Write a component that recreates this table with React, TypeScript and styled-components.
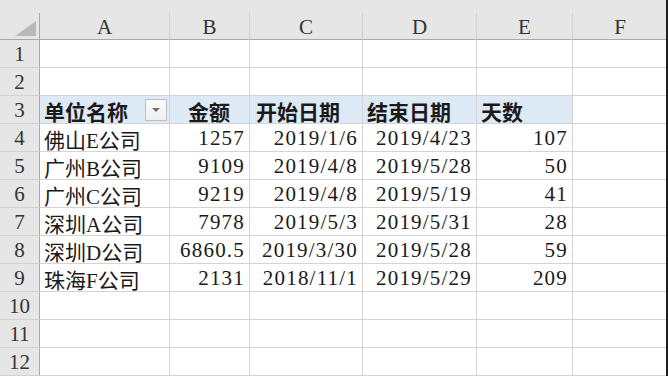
import styled, { createGlobalStyle } from "styled-components";

type Align = "left" | "right" | "center";

type Column = {
  letter: string;
  width: number;
};

const columns: Column[] = [
  { letter: "A", width: 130 },
  { letter: "B", width: 80 },
  { letter: "C", width: 113 },
  { letter: "D", width: 114 },
  { letter: "E", width: 96 },
  { letter: "F", width: 95 },
];

// 표 머리글 (3행)
const headers = [
  { text: "单位名称", pad: 4, filter: true },
  { text: "金额", pad: 18 },
  { text: "开始日期", pad: 6 },
  { text: "结束日期", pad: 4 },
  { text: "天数", pad: 4 },
];

const rows: string[][] = [
  ["佛山E公司", "1257", "2019/1/6", "2019/4/23", "107"],
  ["广州B公司", "9109", "2019/4/8", "2019/5/28", "50"],
  ["广州C公司", "9219", "2019/4/8", "2019/5/19", "41"],
  ["深圳A公司", "7978", "2019/5/3", "2019/5/31", "28"],
  ["深圳D公司", "6860.5", "2019/3/30", "2019/5/28", "59"],
  ["珠海F公司", "2131", "2018/11/1", "2019/5/29", "209"],
];

const GlobalStyle = createGlobalStyle`
  html, body {
    margin: 0;
    padding: 0;
    background: #fff;
  }
  body {
    font-family: "Liberation Serif", "Noto Sans CJK SC", serif;
    color: #222;
  }
`;

const Sheet = styled.div`
  width: 668px;
  height: 376px;
  overflow: hidden;
  display: flex;
  flex-direction: column;
  background: #fff;
  border-right: 2px solid #1e1e1e;
  box-sizing: border-box;
`;

const TopBand = styled.div`
  height: 13px;
  flex-shrink: 0;
  background: #e6e6e6;
`;

const Grid = styled.div`
  display: grid;
  grid-template-columns: 40px ${columns.map((c) => `${c.width}px`).join(" ")};
  grid-template-rows: 27px repeat(12, 28px);
`;

const Corner = styled.div`
  position: relative;
  background: #e6e6e6;
  border-right: 1px solid #a9a9a9;
  border-bottom: 1px solid #a9a9a9;
  box-sizing: border-box;

  &::after {
    content: "";
    position: absolute;
    right: 3px;
    bottom: 3px;
    width: 0;
    height: 0;
    border-left: 21px solid transparent;
    border-bottom: 15px solid #b9b9b9;
  }
`;

const ColHead = styled.div`
  background: #e6e6e6;
  border-right: 1px solid #d0d0d0;
  border-bottom: 1px solid #a9a9a9;
  box-sizing: border-box;
  display: flex;
  align-items: center;
  justify-content: center;
  font-size: 21px;
  color: #333;
  padding-top: 3px;
`;

const RowHead = styled.div`
  background: #e6e6e6;
  border-right: 1px solid #a9a9a9;
  border-bottom: 1px solid #d2d2d2;
  box-sizing: border-box;
  display: flex;
  align-items: center;
  justify-content: center;
  font-size: 21px;
  color: #333;
  padding-top: 2px;
`;

const Cell = styled.div<{ $align?: Align; $pad?: number; $head?: boolean }>`
  border-right: 1px solid #d4d4d4;
  border-bottom: 1px solid #d4d4d4;
  box-sizing: border-box;
  display: flex;
  align-items: center;
  justify-content: ${({ $align }) =>
    $align === "right" ? "flex-end" : $align === "center" ? "center" : "flex-start"};
  padding: 2px ${({ $align }) => ($align === "right" ? 4 : 0)}px 0
    ${({ $pad, $align }) => ($align === "right" ? 0 : $pad ?? 4)}px;
  letter-spacing: ${({ $align }) => ($align === "right" ? "1.2px" : "0")};
  font-size: 21px;
  white-space: nowrap;
  overflow: hidden;
  background: ${({ $head }) => ($head ? "#dde9f5" : "#fff")};
  font-weight: ${({ $head }) => ($head ? 700 : 400)};
  color: #1a1a1a;
`;

const FilterCell = styled(Cell)`
  justify-content: space-between;
  padding-right: 2px;
`;

const FilterButton = styled.span`
  width: 22px;
  height: 22px;
  box-sizing: border-box;
  border: 1px solid #bdbdbd;
  background: linear-gradient(#fbfbfb, #efefef);
  display: flex;
  align-items: center;
  justify-content: center;
  margin-top: -2px;

  &::before {
    content: "";
    width: 0;
    height: 0;
    border-left: 4px solid transparent;
    border-right: 4px solid transparent;
    border-top: 4px solid #707070;
  }
`;

export default function App() {
  const blank = (r: number) =>
    columns.map((c) => <Cell key={`${r}-${c.letter}`} />);

  return (
    <>
      <GlobalStyle />
      <Sheet>
        <TopBand />
        <Grid>
          <Corner />
          {columns.map((c) => (
            <ColHead key={c.letter}>{c.letter}</ColHead>
          ))}

          <RowHead>1</RowHead>
          {blank(1)}
          <RowHead>2</RowHead>
          {blank(2)}

          <RowHead>3</RowHead>
          {headers.map((h) =>
            h.filter ? (
              <FilterCell key={h.text} $head $pad={h.pad}>
                {h.text}
                <FilterButton />
              </FilterCell>
            ) : (
              <Cell key={h.text} $head $pad={h.pad}>
                {h.text}
              </Cell>
            )
          )}
          <Cell />

          {rows.map((row, i) => (
            <Row key={i} index={i + 4} values={row} />
          ))}

          {[10, 11, 12].map((n) => (
            <Row key={n} index={n} values={[]} />
          ))}
        </Grid>
      </Sheet>
    </>
  );
}

function Row({ index, values }: { index: number; values: string[] }) {
  return (
    <>
      <RowHead>{index}</RowHead>
      {columns.map((c, i) => (
        <Cell key={c.letter} $align={i === 0 ? "left" : "right"}>
          {values[i] ?? ""}
        </Cell>
      ))}
    </>
  );
}
